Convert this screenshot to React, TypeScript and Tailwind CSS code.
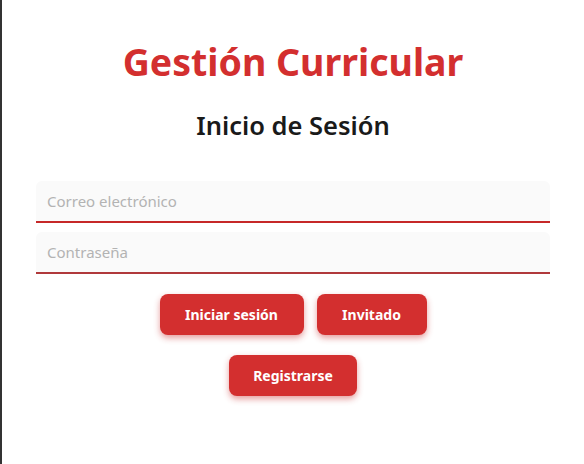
import React from "react";

export default function App() {
  return (
    <div
      className="w-[584px] h-[464px] bg-white border-l-2 border-[#333333] flex flex-col items-center"
      style={{ fontFamily: '"Noto Sans", "Open Sans", sans-serif' }}
    >
      <h1 className="mt-[36px] text-[37.5px] leading-[52px] font-bold text-[#d32f2f]">
        Gestión Curricular
      </h1>
      <h2 className="mt-[19px] text-[25.5px] leading-[36px] font-semibold text-[#1a1a1a]">
        Inicio de Sesión
      </h2>
      <div className="mt-[38px] w-full px-[34px] flex flex-col gap-[9px]">
        <input
          placeholder="Correo electrónico"
          className="w-full h-[42px] bg-[#fafafa] rounded-t-[6px] border-b-2 border-[#c62828] px-[11px] text-[15px] text-[#333] placeholder:text-[#b3b3b3] outline-none"
        />
        <input
          type="password"
          placeholder="Contraseña"
          className="w-full h-[42px] bg-[#fafafa] rounded-t-[6px] border-b-2 border-[#b0393b] px-[11px] text-[15px] text-[#333] placeholder:text-[#b3b3b3] outline-none"
        />
      </div>
      <div className="mt-[20px] flex gap-[13px]">
        <button className="w-[144px] h-[41px] rounded-[8px] bg-[#d32f2f] text-white text-[14px] font-bold shadow-[0_3px_6px_rgba(198,40,40,0.45)]">
          Iniciar sesión
        </button>
        <button className="w-[110px] h-[41px] rounded-[8px] bg-[#d32f2f] text-white text-[14px] font-bold shadow-[0_3px_6px_rgba(198,40,40,0.45)]">
          Invitado
        </button>
      </div>
      <button className="mt-[20px] w-[128px] h-[41px] rounded-[8px] bg-[#d32f2f] text-white text-[14px] font-bold shadow-[0_3px_6px_rgba(198,40,40,0.45)]">
        Registrarse
      </button>
    </div>
  );
}
